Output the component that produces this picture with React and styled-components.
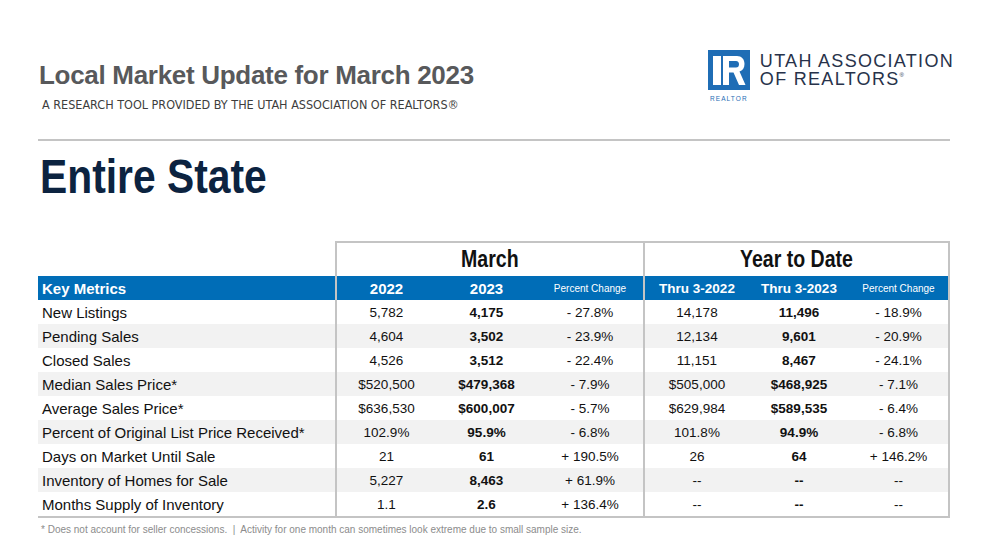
import React from 'react';
import styled, { createGlobalStyle } from 'styled-components';

const sans = '"Liberation Sans", Arial, sans-serif';
const condensed = '"DejaVu Sans Condensed", "Liberation Sans", sans-serif';

const GlobalStyle = createGlobalStyle`
  body {
    margin: 0;
    background: #fff;
    font-family: ${sans};
  }
`;

const Page = styled.div`
  width: 912px;
  padding: 50px 0 0 38px;
`;

const Header = styled.header`
  display: flex;
  justify-content: space-between;
  align-items: flex-start;
`;

const TitleBlock = styled.div`
  padding-top: 12px;
`;

const Title = styled.h1`
  margin: 0 0 0 1px;
  font-weight: 700;
  font-size: 26px;
  line-height: 26px;
  letter-spacing: -0.3px;
  color: #58595b;
`;

const Subtitle = styled.p`
  margin: 10px 0 0 4px;
  font-family: ${condensed};
  font-size: 12.5px;
  line-height: 13px;
  color: #3d3d3d;
`;

const LogoWrap = styled.div`
  display: flex;
  gap: 10px;
  margin-right: -4px;
`;

const Mark = styled.div`
  display: flex;
  flex-direction: column;
  align-items: center;
  width: 42px;
`;

const RealtorTag = styled.span`
  margin-top: 5px;
  font-size: 6.5px;
  line-height: 7px;
  letter-spacing: 1.1px;
  color: #1f6db5;
`;

const OrgName = styled.div`
  display: flex;
  flex-direction: column;
  gap: 2px;
  padding-top: 3px;
`;

const OrgLine = styled.span`
  font-size: 18px;
  line-height: 16px;
  letter-spacing: 1.3px;
  color: #27324a;
  white-space: nowrap;
`;

const Reg = styled.sup`
  font-size: 6px;
  line-height: 0;
  vertical-align: 8px;
`;

const Rule = styled.hr`
  margin: 28px 0 0;
  border: 0;
  height: 2px;
  background: #c4c4c4;
`;

const Area = styled.h2`
  display: inline-block;
  margin: 12px 0 0 2px;
  font-weight: 700;
  font-size: 48px;
  line-height: 48px;
  color: #0c2340;
  transform: scaleX(0.85);
  transform-origin: left center;
`;

const Table = styled.div`
  margin-top: 40px;
`;

const cols = '297px 101px 101px 106px 106px 100px 101px';
const line = '2px solid #c4c4c4';

const GroupRow = styled.div`
  display: grid;
  grid-template-columns: 297px 308px 307px;
  height: 35px;
`;

const GroupCell = styled.div`
  display: flex;
  align-items: center;
  justify-content: center;
  border-top: ${line};
  border-left: ${line};
  border-right: ${p => (p.$end ? line : 'none')};
`;

const GroupTitle = styled.span`
  display: inline-block;
  font-weight: 700;
  font-size: 23px;
  color: #111;
  transform: scaleX(0.85);
`;

const Row = styled.div`
  display: grid;
  grid-template-columns: ${cols};
  height: 24px;
  background: ${p => (p.$head ? '#006db7' : p.$shade ? '#f2f2f2' : '#fff')};
  border-bottom: ${p => (p.$last ? line : 'none')};
`;

const Label = styled.div`
  display: flex;
  align-items: center;
  padding-left: 4px;
  font-size: 15px;
  font-weight: ${p => (p.$head ? 700 : 400)};
  color: ${p => (p.$head ? '#fff' : '#111')};
  white-space: nowrap;
`;

const Cell = styled.div`
  display: flex;
  align-items: center;
  justify-content: center;
  border-left: ${p => (p.$divider ? line : 'none')};
  border-right: ${p => (p.$end ? line : 'none')};
  font-size: ${p => p.$size || '13.5px'};
  font-weight: ${p => (p.$bold ? 700 : 400)};
  color: ${p => (p.$head ? '#fff' : '#111')};
  white-space: nowrap;
`;

const Note = styled.p`
  margin: 6px 0 0 3px;
  font-size: 10px;
  line-height: 12px;
  color: #8c8c8c;
  white-space: pre;
`;

const rows = [
  ['New Listings', '5,782', '4,175', '- 27.8%', '14,178', '11,496', '- 18.9%'],
  ['Pending Sales', '4,604', '3,502', '- 23.9%', '12,134', '9,601', '- 20.9%'],
  ['Closed Sales', '4,526', '3,512', '- 22.4%', '11,151', '8,467', '- 24.1%'],
  ['Median Sales Price*', '$520,500', '$479,368', '- 7.9%', '$505,000', '$468,925', '- 7.1%'],
  ['Average Sales Price*', '$636,530', '$600,007', '- 5.7%', '$629,984', '$589,535', '- 6.4%'],
  ['Percent of Original List Price Received*', '102.9%', '95.9%', '- 6.8%', '101.8%', '94.9%', '- 6.8%'],
  ['Days on Market Until Sale', '21', '61', '+ 190.5%', '26', '64', '+ 146.2%'],
  ['Inventory of Homes for Sale', '5,227', '8,463', '+ 61.9%', '--', '--', '--'],
  ['Months Supply of Inventory', '1.1', '2.6', '+ 136.4%', '--', '--', '--'],
];

function RealtorMark() {
  return (
    <svg width="42" height="40" viewBox="0 0 42 40">
      <rect x="0" y="0" width="42" height="40" fill="#1f6db5" />
      <rect x="5" y="6" width="8" height="29" fill="#fff" />
      <path
        fill="#fff"
        fillRule="evenodd"
        d="M15 6 H29 C33.5 6 36.5 9 36.5 14 C36.5 18 34.5 20.5 31.5 21.5 L37.5 35 H31 L25.5 22.5 H21 V35 H15 Z M21 11 H28 C30 11 31 12.3 31 14.2 C31 16.2 30 17.5 28 17.5 H21 Z"
      />
    </svg>
  );
}

function HeadRow() {
  return (
    <Row $head>
      <Label $head>Key Metrics</Label>
      <Cell $head $divider $bold $size="15px">2022</Cell>
      <Cell $head $bold $size="15px">2023</Cell>
      <Cell $head $size="10px">Percent Change</Cell>
      <Cell $head $divider $bold $size="13.5px">Thru 3-2022</Cell>
      <Cell $head $bold $size="13.5px">Thru 3-2023</Cell>
      <Cell $head $end $size="10px">Percent Change</Cell>
    </Row>
  );
}

export default function App() {
  return (
    <>
      <GlobalStyle />
      <Page>
        <Header>
          <TitleBlock>
            <Title>Local Market Update for March 2023</Title>
            <Subtitle>A RESEARCH TOOL PROVIDED BY THE UTAH ASSOCIATION OF REALTORS®</Subtitle>
          </TitleBlock>
          <LogoWrap>
            <Mark>
              <RealtorMark />
              <RealtorTag>REALTOR</RealtorTag>
            </Mark>
            <OrgName>
              <OrgLine>UTAH ASSOCIATION</OrgLine>
              <OrgLine>OF REALTORS<Reg>®</Reg></OrgLine>
            </OrgName>
          </LogoWrap>
        </Header>
        <Rule />
        <div>
          <Area>Entire State</Area>
        </div>

        <Table>
          <GroupRow>
            <div />
            <GroupCell><GroupTitle>March</GroupTitle></GroupCell>
            <GroupCell $end><GroupTitle>Year to Date</GroupTitle></GroupCell>
          </GroupRow>
          <HeadRow />
          {rows.map((r, i) => (
            <Row key={r[0]} $shade={i % 2 === 1} $last={i === rows.length - 1}>
              <Label>{r[0]}</Label>
              <Cell $divider>{r[1]}</Cell>
              <Cell $bold>{r[2]}</Cell>
              <Cell>{r[3]}</Cell>
              <Cell $divider>{r[4]}</Cell>
              <Cell $bold>{r[5]}</Cell>
              <Cell $end>{r[6]}</Cell>
            </Row>
          ))}
        </Table>
        <Note>{'* Does not account for seller concessions.  |  Activity for one month can sometimes look extreme due to small sample size.'}</Note>
      </Page>
    </>
  );
}
